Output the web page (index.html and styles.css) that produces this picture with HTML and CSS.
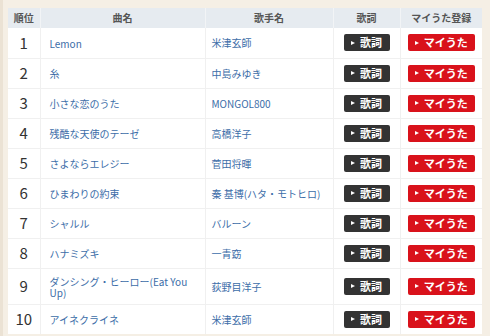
FILE: index.html
```html
<!DOCTYPE html>
<html lang="ja">
<head>
<meta charset="utf-8">
<link rel="stylesheet" href="styles.css">
</head>
<body>
<div class="page">
  <table class="rank">
    <colgroup>
      <col class="c-no"><col class="c-song"><col class="c-artist"><col class="c-lyric"><col class="c-my">
    </colgroup>
    <thead>
      <tr><th>順位</th><th>曲名</th><th>歌手名</th><th>歌詞</th><th>マイうた登録</th></tr>
    </thead>
    <tbody>
      <tr><td class="no">1</td><td class="song"><a>Lemon</a></td><td class="artist"><a>米津玄師</a></td><td class="btn-cell"><span class="btn dark">歌詞</span></td><td class="btn-cell"><span class="btn red">マイうた</span></td></tr>
      <tr><td class="no">2</td><td class="song"><a>糸</a></td><td class="artist"><a>中島みゆき</a></td><td class="btn-cell"><span class="btn dark">歌詞</span></td><td class="btn-cell"><span class="btn red">マイうた</span></td></tr>
      <tr><td class="no">3</td><td class="song"><a>小さな恋のうた</a></td><td class="artist"><a>MONGOL800</a></td><td class="btn-cell"><span class="btn dark">歌詞</span></td><td class="btn-cell"><span class="btn red">マイうた</span></td></tr>
      <tr><td class="no">4</td><td class="song"><a>残酷な天使のテーゼ</a></td><td class="artist"><a>高橋洋子</a></td><td class="btn-cell"><span class="btn dark">歌詞</span></td><td class="btn-cell"><span class="btn red">マイうた</span></td></tr>
      <tr><td class="no">5</td><td class="song"><a>さよならエレジー</a></td><td class="artist"><a>菅田将暉</a></td><td class="btn-cell"><span class="btn dark">歌詞</span></td><td class="btn-cell"><span class="btn red">マイうた</span></td></tr>
      <tr><td class="no">6</td><td class="song"><a>ひまわりの約束</a></td><td class="artist"><a>秦 基博(ハタ・モトヒロ)</a></td><td class="btn-cell"><span class="btn dark">歌詞</span></td><td class="btn-cell"><span class="btn red">マイうた</span></td></tr>
      <tr><td class="no">7</td><td class="song"><a>シャルル</a></td><td class="artist"><a>バルーン</a></td><td class="btn-cell"><span class="btn dark">歌詞</span></td><td class="btn-cell"><span class="btn red">マイうた</span></td></tr>
      <tr><td class="no">8</td><td class="song"><a>ハナミズキ</a></td><td class="artist"><a>一青窈</a></td><td class="btn-cell"><span class="btn dark">歌詞</span></td><td class="btn-cell"><span class="btn red">マイうた</span></td></tr>
      <tr><td class="no">9</td><td class="song"><a>ダンシング・ヒーロー(Eat You Up)</a></td><td class="artist"><a>荻野目洋子</a></td><td class="btn-cell"><span class="btn dark">歌詞</span></td><td class="btn-cell"><span class="btn red">マイうた</span></td></tr>
      <tr><td class="no">10</td><td class="song"><a>アイネクライネ</a></td><td class="artist"><a>米津玄師</a></td><td class="btn-cell"><span class="btn dark">歌詞</span></td><td class="btn-cell"><span class="btn red">マイうた</span></td></tr>
    </tbody>
  </table>
</div>
</body>
</html>
```

FILE: styles.css
```css
html, body {
  margin: 0;
  padding: 0;
  background: #f5efe5;
  height: 100%;
  overflow: hidden;
}
.page {
  padding: 8px 8px 0 5px;
  border-left: 3px solid #ebe2d4;
  box-sizing: border-box;
  height: 336px;
  font-family: "Noto Sans CJK JP", "Noto Sans", sans-serif;
}
.rank {
  width: 474px;
  border-collapse: collapse;
  table-layout: fixed;
  background: #fff;
}
.c-no { width: 32px; }
.c-song { width: 165px; }
.c-artist { width: 128px; }
.c-lyric { width: 67px; }
.c-my { width: 82px; }
.rank th {
  background: #e6ebf0;
  color: #555;
  font-size: 10px;
  font-weight: 700;
  height: 20px;
  padding: 0;
  line-height: 20px;
  border-left: 1px solid #f2f4f6;
}
.rank th:first-child { border-left: none; }
.rank td {
  border-top: 1px solid #f0f0f0;
  border-left: 1px solid #f0f0f0;
  vertical-align: middle;
  height: 30px;
  padding: 6px 0;
  box-sizing: border-box;
}
.rank td:first-child { border-left: none; }
.rank tbody tr:first-child td { border-top: none; }
.no {
  text-align: center;
  font-size: 15px;
  color: #333;
  line-height: 16px;
}
.song, .artist {
  font-size: 10px;
  line-height: 11px;
}
.song { padding: 7px 16px 6px 9px !important; }
.artist { padding: 6px 4px 6px 6px !important; }
.song a, .artist a {
  color: #3c6da8;
}
.btn-cell {
  text-align: center;
  font-size: 0;
}
.btn {
  display: inline-flex;
  align-items: center;
  justify-content: center;
  gap: 5px;
  height: 17px;
  border-radius: 2px;
  color: #fff;
  font-size: 11px;
  font-weight: 700;
  line-height: 17px;
}
.btn::before {
  content: "";
  border-left: 4px solid #fff;
  border-top: 2.5px solid transparent;
  border-bottom: 2.5px solid transparent;
}
.btn.dark {
  background: #333;
  width: 46px;
}
.btn.red {
  background: #d9121b;
  width: 67px;
}
```
